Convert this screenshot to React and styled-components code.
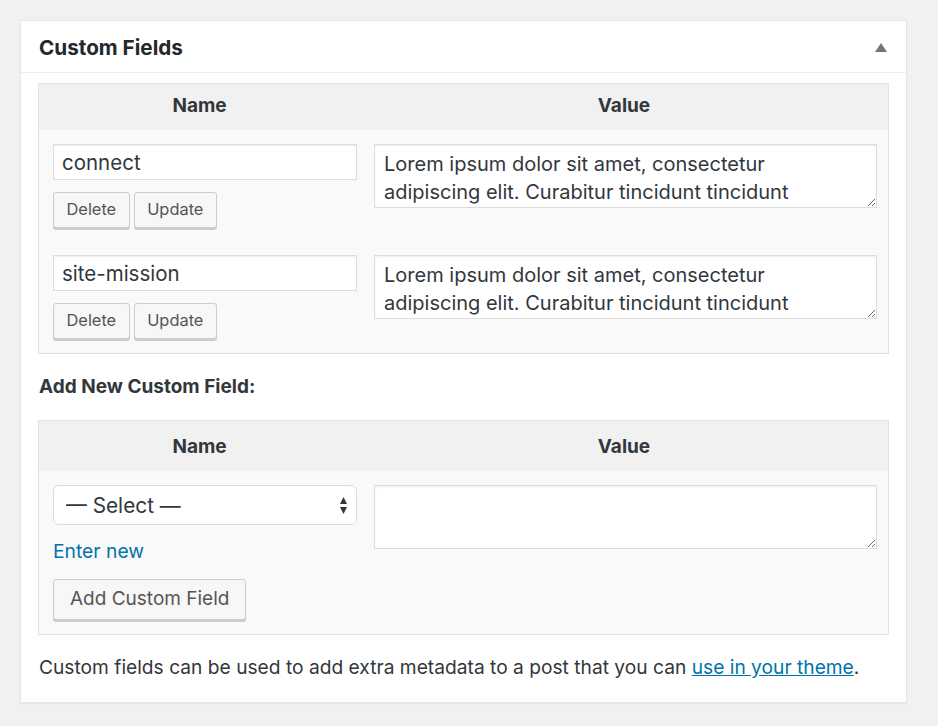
import React from "react";
import styled, { createGlobalStyle } from "styled-components";

const Global = createGlobalStyle`
  html, body { margin: 0; padding: 0; background: #f1f1f1; }
  body { font-family: Inter, "Noto Sans", "Liberation Sans", sans-serif; color: #32373c; }
  * { box-sizing: border-box; }
`;

const Page = styled.div`
  padding: 20px 31px 24px 20px;
  width: 938px;
  min-height: 726px;
`;

const Panel = styled.section`
  background: #fff;
  border: 1px solid #e5e5e5;
  box-shadow: 0 1px 1px rgba(0, 0, 0, 0.04);
  width: 887px;
`;

const PanelHeader = styled.header`
  height: 52px;
  border-bottom: 1px solid #eee;
  display: flex;
  align-items: center;
  justify-content: space-between;
  padding: 2px 19px 0 18px;
`;

const Title = styled.h2`
  margin: 0;
  font-size: 20.7px;
  font-weight: 700;
  color: #23282d;
`;

const Toggle = styled.svg`
  width: 12px;
  height: 9px;
`;

const PanelBody = styled.div`
  padding: 10px 17px 0 17px;
`;

const Table = styled.div`
  border: 1px solid #e1e1e1;
  background: #f9f9f9;
`;

const HeadRow = styled.div`
  display: grid;
  grid-template-columns: 321px 1fr;
  height: ${(p) => p.$h}px;
  background: #f1f1f1;
  align-items: center;
`;

const Th = styled.div`
  text-align: center;
  font-weight: 700;
  font-size: 19px;
  color: #32373c;
  padding-bottom: ${(p) => p.$pb || 0}px;
`;

const Row = styled.div`
  display: grid;
  grid-template-columns: 304px 1fr;
  column-gap: 17px;
  padding: 14px 11px ${(p) => p.$pb}px 14px;
  align-items: start;
`;

const NameCell = styled.div`
  display: flex;
  flex-direction: column;
  align-items: flex-start;
`;

const TextInput = styled.input`
  width: 304px;
  height: 36px;
  border: 1px solid #ddd;
  box-shadow: inset 0 1px 2px rgba(0, 0, 0, 0.07);
  background: #fff;
  font: inherit;
  font-size: 20.5px;
  color: #32373c;
  padding: 0 8px;
  margin: 0;
  outline: none;
`;

const TextArea = styled.textarea`
  display: block;
  width: 503px;
  height: 64px;
  border: 1px solid #ddd;
  box-shadow: inset 0 1px 2px rgba(0, 0, 0, 0.07);
  background: #fff;
  font: inherit;
  font-size: 20px;
  line-height: 28px;
  color: #32373c;
  padding: 5px 52px 5px 9px;
  margin: 0;
  resize: vertical;
  overflow: hidden;
  outline: none;
`;

const Buttons = styled.div`
  display: flex;
  gap: 4px;
  margin-top: 12px;
`;

const Button = styled.button`
  height: ${(p) => p.$h || 36}px;
  padding: 0 ${(p) => p.$px || 12.5}px 2px;
  background: #f7f7f7;
  border: 1px solid #ccc;
  border-radius: 3px;
  box-shadow: 0 2px 0 #ccc;
  color: #555;
  font-family: inherit;
  font-size: ${(p) => p.$fs || 16.4}px;
  cursor: pointer;
  white-space: nowrap;
`;

const Section = styled.h3`
  margin: 0;
  padding: 21px 0 22px 1px;
  font-size: 19px;
  font-weight: 700;
  color: #32373c;
  line-height: 23px;
`;

const SelectWrap = styled.div`
  position: relative;
  width: 304px;
  height: 40px;
`;

const Select = styled.select`
  appearance: none;
  -webkit-appearance: none;
  width: 100%;
  height: 100%;
  border: 1px solid #ddd;
  border-radius: 6px;
  background: #fff;
  font: inherit;
  font-size: 20.8px;
  color: #32373c;
  padding: 0 30px 0 12px;
  margin: 0;
  outline: none;
`;

const SelectArrows = styled.svg`
  position: absolute;
  right: 10px;
  top: 12px;
  width: 7px;
  height: 17px;
  pointer-events: none;
`;

const EnterNew = styled.a`
  margin-top: 15px;
  font-size: 19.3px;
  color: #0073aa;
  text-decoration: none;
  line-height: 22px;
`;

const AddButtonWrap = styled.div`
  margin-top: 17px;
`;

const Footer = styled.p`
  margin: 0;
  padding: 20px 1px 23px;
  font-size: 19.2px;
  line-height: 24px;
  color: #32373c;
`;

const Link = styled.a`
  color: #0073aa;
  text-decoration: underline;
`;

const lorem =
  "Lorem ipsum dolor sit amet, consectetur adipiscing elit. Curabitur tincidunt tincidunt nisl, sed fermentum nunc.";

const fields = [
  { key: "connect", value: lorem },
  { key: "site-mission", value: lorem },
];

export default function App() {
  return (
    <Page>
      <Global />
      <Panel>
        <PanelHeader>
          <Title>Custom Fields</Title>
          <Toggle viewBox="0 0 12 9">
            <polygon points="6,0 12,9 0,9" fill="#72777c" />
          </Toggle>
        </PanelHeader>
        <PanelBody>
          <Table>
            <HeadRow $h={46}>
              <Th $pb={4}>Name</Th>
              <Th $pb={4}>Value</Th>
            </HeadRow>
            {fields.map((f, i) => (
              <Row key={f.key} $pb={i === fields.length - 1 ? 14 : 13}>
                <NameCell>
                  <TextInput defaultValue={f.key} />
                  <Buttons>
                    <Button>Delete</Button>
                    <Button>Update</Button>
                  </Buttons>
                </NameCell>
                <TextArea defaultValue={f.value} />
              </Row>
            ))}
          </Table>
          <Section>Add New Custom Field:</Section>
          <Table>
            <HeadRow $h={50}>
              <Th $pb={0}>Name</Th>
              <Th $pb={0}>Value</Th>
            </HeadRow>
            <Row $pb={14}>
              <NameCell>
                <SelectWrap>
                  <Select defaultValue="">
                    <option value="">— Select —</option>
                  </Select>
                  <SelectArrows viewBox="0 0 7 17">
                    <polygon points="3.5,0 7,7 0,7" fill="#32373c" />
                    <polygon points="0,10 7,10 3.5,17" fill="#32373c" />
                  </SelectArrows>
                </SelectWrap>
                <EnterNew href="#">Enter new</EnterNew>
                <AddButtonWrap>
                  <Button $h={41} $px={16} $fs={19}>Add Custom Field</Button>
                </AddButtonWrap>
              </NameCell>
              <TextArea defaultValue="" />
            </Row>
          </Table>
          <Footer>
            Custom fields can be used to add extra metadata to a post that you can{" "}
            <Link href="#">use in your theme</Link>.
          </Footer>
        </PanelBody>
      </Panel>
    </Page>
  );
}
